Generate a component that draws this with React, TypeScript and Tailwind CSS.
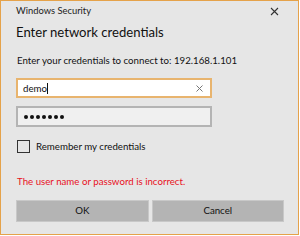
export default function App() {
  return (
    <div className="w-[300px] h-[236px] bg-white" style={{ fontFamily: 'Lato, "Noto Sans", sans-serif' }}>
      <div className="w-[299px] h-[235px] border border-[#e5a24a] bg-[#e6e6e6] flex flex-col px-[15px]">
        <div className="flex items-center justify-between h-[20px]">
          <span className="text-[9.4px] text-[#222]">Windows Security</span>
          <svg width="9" height="9" viewBox="0 0 9 9" className="mr-[4px]">
            <path d="M1 1 L8 8 M8 1 L1 8" stroke="#333" strokeWidth="1.1" />
          </svg>
        </div>
        <div className="text-[13.1px] leading-[16px] text-[#111] mt-[3px]">Enter network credentials</div>
        <div className="text-[9.7px] leading-[12px] text-[#111] mt-[14px] ml-[1px] whitespace-nowrap">Enter your credentials to connect to: 192.168.1.101</div>
        <div className="mt-[12px] w-[196px] h-[20px] border-2 border-[#e8b46e] bg-white flex items-center pl-[5px] pr-[7px]">
          <span className="text-[9.7px] text-[#111]">demo</span>
          <span className="w-px h-[11px] bg-[#111]" />
          <span className="flex-1" />
          <svg width="7" height="7" viewBox="0 0 7 7">
            <path d="M0.5 0.5 L6.5 6.5 M6.5 0.5 L0.5 6.5" stroke="#777" strokeWidth="1" />
          </svg>
        </div>
        <div className="mt-[8px] w-[196px] h-[21px] border-2 border-[#b4b4b4] bg-[#f0f0f0] flex items-center pl-[6px] gap-[2px]">
          {Array.from({ length: 7 }).map((_, i) => (
            <span key={i} className="w-[4px] h-[4px] rounded-full bg-[#111]" />
          ))}
        </div>
        <div className="mt-[12px] flex items-center gap-[6px] ml-[1px]">
          <span className="w-[13px] h-[13px] border-[1.5px] border-[#333]" />
          <span className="text-[9.7px] text-[#111]">Remember my credentials</span>
        </div>
        <div className="mt-[21px] ml-[1px] text-[9.7px] leading-[12px] text-[#e81123]">The user name or password is incorrect.</div>
        <div className="mt-[13px] flex gap-[3px] w-[268px]">
          <button className="flex-1 h-[22px] bg-[#b4b4b4] border border-[#c8c8c8] text-[9.7px] text-[#111]">OK</button>
          <button className="flex-1 h-[22px] bg-[#b4b4b4] border border-[#c8c8c8] text-[9.7px] text-[#111]">Cancel</button>
        </div>
      </div>
    </div>
  );
}
